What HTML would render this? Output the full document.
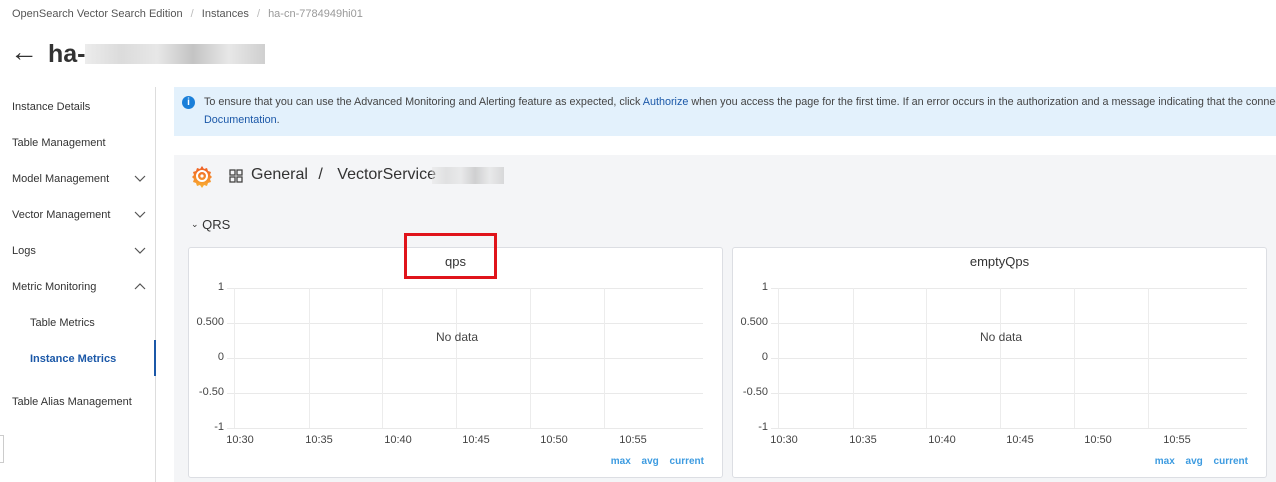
<!DOCTYPE html>
<html><head><meta charset="utf-8"><style>
*{margin:0;padding:0;box-sizing:border-box}
body{width:1276px;height:482px;overflow:hidden;background:#fff;font-family:"Liberation Sans",sans-serif;color:#333;position:relative}
.a{position:absolute;white-space:nowrap}
.nav{font-size:11px;color:#333}
.panel{position:absolute;top:247px;width:535px;height:231px;background:#fff;border:1px solid #dcdee3;border-radius:3px}
.panel .t{position:absolute;top:6px;left:0;width:100%;text-align:center;font-size:13px;color:#333}
.hl{position:absolute;left:38px;width:476px;height:1px;background:#e9e9e9}
.vl{position:absolute;top:40px;width:1px;height:140px;background:#ececec}
.yl{position:absolute;right:498px;font-size:11px;color:#444;text-align:right}
.xl{position:absolute;top:186px;font-size:11px;color:#444;width:40px;margin-left:-20px;text-align:center}
.lg{position:absolute;top:208px;right:18px;font-size:10px;font-weight:bold;color:#3d9be0;word-spacing:8px}
.nd{position:absolute;top:82px;left:228px;width:80px;text-align:center;font-size:12px;color:#444}
.blur{position:absolute;background:linear-gradient(90deg,#e4e4e4,#ccc 20%,#ddd 40%,#aaa 60%,#ddd 80%,#bbb);opacity:.7}
</style></head><body>
<div class="a" style="left:12px;top:8px;font-size:11px;color:#555">OpenSearch Vector Search Edition <span style="color:#bbb;margin:0 5px">/</span> Instances <span style="color:#bbb;margin:0 5px">/</span> <span style="color:#999">ha-cn-7784949hi01</span></div>
<div class="a" style="left:10px;top:36px;font-size:28px;font-weight:bold;color:#333">&#8592;</div>
<div class="a" style="left:48px;top:40px;font-size:25px;font-weight:bold;color:#333">ha-</div>
<div class="blur" style="left:85px;top:44px;width:180px;height:20px"></div>

<div class="a nav" style="left:12px;top:101px">Instance Details</div>
<div class="a nav" style="left:12px;top:137px">Table Management</div>
<div class="a nav" style="left:12px;top:173px">Model Management</div>
<div class="a nav" style="left:12px;top:209px">Vector Management</div>
<div class="a nav" style="left:12px;top:245px">Logs</div>
<div class="a nav" style="left:12px;top:281px">Metric Monitoring</div>
<div class="a nav" style="left:30px;top:317px">Table Metrics</div>
<div class="a nav" style="left:30px;top:353px;color:#1b58a8;font-weight:bold">Instance Metrics</div>
<div class="a nav" style="left:12px;top:396px">Table Alias Management</div>
<svg class="a" style="left:133px;top:172px" width="14" height="120" fill="none" stroke="#555" stroke-width="1.2">
<path d="M2 4l5 5 5-5"/><path d="M2 40l5 5 5-5"/><path d="M2 76l5 5 5-5"/><path d="M2 117l5-5 5 5"/></svg>
<div class="a" style="left:155px;top:87px;width:1px;height:395px;background:#ddd"></div>
<div class="a" style="left:154px;top:340px;width:2px;height:36px;background:#1b58a8"></div>
<div class="a" style="left:0;top:435px;width:4px;height:28px;border:1px solid #ccc;border-left:none"></div>

<div class="a" style="left:174px;top:87px;width:1102px;height:49px;background:#e3f1fc"></div>
<div class="a" style="left:182px;top:96px;width:13px;height:13px;border-radius:50%;background:#1a7fd9;color:#fff;font-size:10px;font-weight:bold;text-align:center;line-height:13px">i</div>
<div class="a" style="left:204px;top:96px;font-size:10.8px;color:#444">To ensure that you can use the Advanced Monitoring and Alerting feature as expected, click <span style="color:#1b58a8">Authorize</span> when you access the page for the first time. If an error occurs in the authorization and a message indicating that the connection</div>
<div class="a" style="left:204px;top:114px;font-size:10.8px;color:#1b58a8">Documentation<span style="color:#444">.</span></div>

<div class="a" style="left:174px;top:155px;width:1102px;height:327px;background:#f4f5f7"></div>
<svg class="a" style="left:190px;top:164px" width="24" height="24" viewBox="0 0 24 24"><defs><linearGradient id="g" x1="0" y1="1" x2="0" y2="0"><stop offset="0" stop-color="#f9b233"/><stop offset="1" stop-color="#ee5a24"/></linearGradient></defs><path d="M12 2l2 3 3-1 1 3 3 1-1 3 2 2-2 2 1 3-3 1-1 3-3-1-2 3-2-3-3 1-1-3-3-1 1-3-2-2 2-2-1-3 3-1 1-3 3 1z" fill="url(#g)"/><circle cx="12" cy="12" r="5" fill="none" stroke="#fff" stroke-width="2"/><circle cx="12" cy="12" r="1.6" fill="#fff"/></svg>
<svg class="a" style="left:229px;top:169px" width="14" height="14" fill="none" stroke="#444" stroke-width="1.3"><rect x="1" y="1" width="5" height="5"/><rect x="8" y="1" width="5" height="5"/><rect x="1" y="8" width="5" height="5"/><rect x="8" y="8" width="5" height="5"/></svg>
<div class="a" style="left:251px;top:166px;font-size:16px;color:#333">General <span style="margin:0 10px 0 6px">/</span> VectorService</div>
<div class="blur" style="left:432px;top:167px;width:72px;height:17px;opacity:.5"></div>
<div class="a" style="left:191px;top:217px;font-size:13px;color:#333"><span style="font-size:9px;vertical-align:2px">&#8964;</span> QRS</div>

<div class="panel" style="left:188px">
<div class="t">qps</div>
<div class="hl" style="top:40px"></div><div class="hl" style="top:75px"></div><div class="hl" style="top:110px"></div><div class="hl" style="top:145px"></div><div class="hl" style="top:180px"></div>
<div class="vl" style="left:45px"></div><div class="vl" style="left:120px"></div><div class="vl" style="left:193px"></div><div class="vl" style="left:267px"></div><div class="vl" style="left:341px"></div><div class="vl" style="left:415px"></div>
<div class="yl" style="top:33px">1</div><div class="yl" style="top:68px">0.500</div><div class="yl" style="top:103px">0</div><div class="yl" style="top:138px">-0.50</div><div class="yl" style="top:173px">-1</div>
<div class="xl" style="left:51px">10:30</div><div class="xl" style="left:130px">10:35</div><div class="xl" style="left:209px">10:40</div><div class="xl" style="left:287px">10:45</div><div class="xl" style="left:365px">10:50</div><div class="xl" style="left:444px">10:55</div>
<div class="nd">No data</div>
<div class="lg">max avg current</div>
</div>
<div class="panel" style="left:732px">
<div class="t">emptyQps</div>
<div class="hl" style="top:40px"></div><div class="hl" style="top:75px"></div><div class="hl" style="top:110px"></div><div class="hl" style="top:145px"></div><div class="hl" style="top:180px"></div>
<div class="vl" style="left:45px"></div><div class="vl" style="left:120px"></div><div class="vl" style="left:193px"></div><div class="vl" style="left:267px"></div><div class="vl" style="left:341px"></div><div class="vl" style="left:415px"></div>
<div class="yl" style="top:33px">1</div><div class="yl" style="top:68px">0.500</div><div class="yl" style="top:103px">0</div><div class="yl" style="top:138px">-0.50</div><div class="yl" style="top:173px">-1</div>
<div class="xl" style="left:51px">10:30</div><div class="xl" style="left:130px">10:35</div><div class="xl" style="left:209px">10:40</div><div class="xl" style="left:287px">10:45</div><div class="xl" style="left:365px">10:50</div><div class="xl" style="left:444px">10:55</div>
<div class="nd">No data</div>
<div class="lg">max avg current</div>
</div>
<div class="a" style="left:404px;top:233px;width:93px;height:46px;border:3px solid #e0141b"></div>
</body></html>
